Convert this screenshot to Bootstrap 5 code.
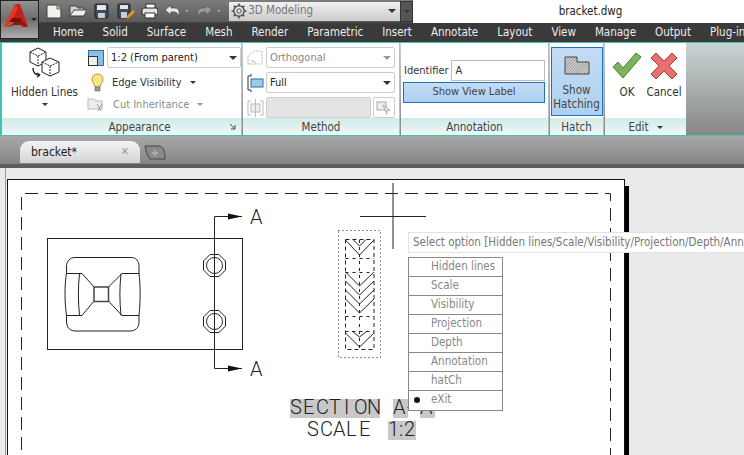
<!DOCTYPE html>
<html lang="en">
<head>
  <meta charset="UTF-8">
  <title>bracket.dwg</title>
  <meta name="viewport" content="width=device-width, initial-scale=1">
  <link href="https://cdn.jsdelivr.net/npm/bootstrap@5.3.0/dist/css/bootstrap.min.css" rel="stylesheet">
  <style>
    body { width: 744px; height: 455px; overflow: hidden; font: 11.5px/1.2 "DejaVu Sans Condensed", Roboto, "Liberation Sans", sans-serif; color: #333; background: #e9eaec; }
    .app-btn { width: 39px; height: 39px; left: 0; top: 0; background: linear-gradient(#929292, #6d6d6d 50%, #adadad); border: 1px solid #222; z-index: 2; }
    .qat-bar { height: 23px; }
    .qat-dark { width: 413px; padding-left: 45px; background: linear-gradient(#7d7d7d, #5a5a5a); gap: 6px; border-bottom: 1px solid #444; }
    .qat-combo { width: 172px; height: 19px; margin-left: 1px; background: linear-gradient(#f0f0f0, #cbcbcb); color: #777; font-size: 11.5px; padding-left: 2px; }
    .qat-combo .gear-icon { margin-right: 1px; }
    .qat-more { width: 13px; height: 21px; background: #555; border: 1px solid #333; margin-left: -6px; }
    .title-area { background: #fff; color: #222; font-size: 11.5px; padding-left: 24px; }
    .menu-row { height: 19px; background: #3a3a3a; padding: 1px 0 0 53px; gap: 19px; color: #ececec; font-size: 11.5px; white-space: nowrap; }
    .ribbon-row { height: 94px; background: linear-gradient(#c9d4d4, #878787); border-top: 1px solid #3fc4b4; border-bottom: 1px solid #3fc4b4; border-left: 2px solid #3fc4b4; }
    .rb-panel { background: #fff; border-right: 1px solid #bbb; margin-right: 1px; }
    .rb-body { height: 75px; }
    .rb-title { height: 17px; background: linear-gradient(#d0ebe8, #eef9f8); color: #444; text-align: center; padding-top: 1px; line-height: 16px; font-size: 11.5px; }
    .rb-combo { height: 21px; margin-left: 2px; border: 1px solid #ccc; background: #fff; padding: 0 3px; font-size: 11px; color: #222; border-radius: 2px; }
    .rb-combo.is-off { color: #888; }
    .rb-combo.is-blank { background: #e4e4e4; }
    .arrow-dn { width: 0; height: 0; border-left: 4px solid transparent; border-right: 4px solid transparent; border-top: 4px solid #333; }
    .arrow-sm { border-left-width: 3px; border-right-width: 3px; border-top-width: 3px; }
    .arrow-off { border-top-color: #999; }
    .rb-line { height: 21px; font-size: 11px; white-space: nowrap; }
    .line-tight { margin-top: 1px; }
    .rb-big { font-size: 11.5px; line-height: 14px; text-align: center; }
    .anno-body { padding: 17px 3px 0 2px; }
    .id-label { padding-left: 1px; font-size: 11px; }
    .id-input { width: 95px; height: 21px; margin-left: 2px; border: 1px solid #bbb; padding: 1px 4px; font-size: 11px; line-height: 17px; }
    .btn-on { background: linear-gradient(#c4dcf4, #aed0f0); border: 1px solid #1a6fc6; color: #444; border-radius: 0; padding: 0; font-size: 11px; }
    .btn-on:hover { background: #b8d6f2; border-color: #1a6fc6; color: #444; }
    .btn-label { height: 21px; margin-top: 1px; }
    .btn-hatch { width: 52px; height: 69px; font-size: 11.5px; }
    .tab-row { height: 32px; background: linear-gradient(#a8a8a8, #848484); border-bottom: 4px solid #5c5c5c; padding: 5px 0 0 20px; }
    .doc-tab { width: 120px; height: 22px; background: linear-gradient(#f4f4f4, #d4d4d4); border-radius: 9px 9px 0 0; padding: 0 11px; font-size: 12px; color: #222; }
    .tab-x { color: #999; font-weight: 700; font-size: 11px; }
    .cad-area { height: 287px; }
    .cad-svg { left: 0; top: 0; }
    .hint-box { left: 408px; top: 64px; width: 336px; height: 21px; background: #fff; border: 1px solid #e2e2e2; border-right: 0; color: #777; font-size: 11.5px; line-height: 19px; padding-left: 4px; white-space: nowrap; overflow: hidden; }
    .opt-menu { left: 408px; top: 89px; width: 95px; border: 1px solid #888; background: #fff; border-radius: 0; }
    .opt-menu .list-group-item { height: 19px; padding: 0 0 0 22px; line-height: 17px; font-size: 11.5px; color: #888; border-color: #888; position: relative; }
    .opt-dot { left: 5px; top: 6px; width: 6px; height: 6px; background: #111; }
    .cad-label { font-family: Roboto, "Liberation Mono", monospace; font-weight: 300; fill: #222; }
  </style>
</head>
<body>

  <!-- application button -->
  <div class="app-btn position-absolute d-flex align-items-center">
    <svg width="37" height="37" viewBox="0 0 37 37">
      <path d="M14 3 L19 3 L27 26 L21 26 L19 19 L11 19 L6 26 L3 26 Z" fill="#c4201a"/>
      <path d="M14 3 L3 26 L8 26 L12 17 L17 7 Z" fill="#e23a28"/>
      <path d="M11 17 L20 17 L21 21 L8 21 Z" fill="#7a100e"/>
      <path d="M8 26 L13 21 L23 21 L27 26 L21 24 L13 24 Z" fill="#8e1512"/>
      <path d="M30 17 L36 17 L33 20 Z" fill="#222"/>
    </svg>
  </div>

  <!-- quick access + title -->
  <div class="qat-bar d-flex">
    <div class="qat-dark d-flex align-items-center">
      <svg width="18" height="16" viewBox="0 0 18 16"><path d="M2 2 H12 L16 6 V15 H2 Z" fill="#f2f2ea" stroke="#444"/><path d="M12 2 V6 H16" fill="#ccc" stroke="#666"/></svg>
      <svg width="18" height="16" viewBox="0 0 18 16"><path d="M1 3 H7 L9 5 H15 V13 H1 Z" fill="#cdd6dc" stroke="#444"/><path d="M1 13 L5 7 H18 L15 13 Z" fill="#eee" stroke="#444"/></svg>
      <svg width="18" height="16" viewBox="0 0 18 16"><rect x="2" y="1" width="13" height="14" rx="1" fill="#3f4c5c" stroke="#222"/><rect x="4" y="2" width="9" height="5" fill="#e8e8e8"/><rect x="5" y="10" width="7" height="5" fill="#ccd"/></svg>
      <svg width="18" height="16" viewBox="0 0 18 16"><rect x="1" y="1" width="12" height="14" rx="1" fill="#3f4c5c" stroke="#222"/><rect x="3" y="2" width="8" height="4" fill="#e8e8e8"/><rect x="4" y="9" width="6" height="6" fill="#ccd"/><path d="M9 14 L16 7 L18 9 L11 16 Z" fill="#e89a20"/></svg>
      <svg width="18" height="16" viewBox="0 0 18 16"><rect x="5" y="1" width="9" height="5" fill="#fff" stroke="#333"/><rect x="1" y="5" width="16" height="7" rx="2" fill="#e4e4e4" stroke="#222"/><rect x="4" y="10" width="10" height="5" fill="#fff" stroke="#333"/></svg>
      <svg width="26" height="16" viewBox="0 0 26 16"><path d="M1 7 L7 2 V5 H11 C15 5 16 9 15 14 C14 10 12 9 10 9 H7 V12 Z" fill="#e8e8e8" stroke="#333" stroke-width=".6"/><path d="M21 7 H25 L23 9 Z" fill="#aaa"/></svg>
      <svg width="26" height="16" viewBox="0 0 26 16"><path d="M16 7 L10 2 V5 H6 C2 5 1 9 2 14 C3 10 5 9 7 9 H10 V12 Z" fill="#9a9a9a" stroke="#555" stroke-width=".6"/><path d="M21 7 H25 L23 9 Z" fill="#aaa"/></svg>
      <div class="qat-combo d-flex align-items-center">
        <svg class="gear-icon" width="16" height="16" viewBox="0 0 16 16"><circle cx="8" cy="8" r="5.2" fill="none" stroke="#555" stroke-width="1.5"/><circle cx="8" cy="8" r="2.2" fill="none" stroke="#555"/><path d="M8 .5 V3 M8 13 V15.5 M.5 8 H3 M13 8 H15.5 M2.7 2.7 L4.4 4.4 M11.6 11.6 L13.3 13.3 M13.3 2.7 L11.6 4.4 M4.4 11.6 L2.7 13.3" stroke="#555" stroke-width="1.6"/></svg>
        <span class="flex-grow-1">3D Modeling</span>
        <span class="arrow-dn me-1"></span>
      </div>
      <div class="qat-more d-flex flex-column align-items-center justify-content-center"><span class="arrow-dn arrow-sm"></span></div>
    </div>
    <div class="title-area flex-grow-1 d-flex align-items-center justify-content-center">bracket.dwg</div>
  </div>

  <!-- ribbon tabs -->
  <div class="menu-row d-flex align-items-center">
    <span>Home</span><span>Solid</span><span>Surface</span><span>Mesh</span><span>Render</span><span>Parametric</span><span>Insert</span><span>Annotate</span><span>Layout</span><span>View</span><span>Manage</span><span>Output</span><span>Plug-in</span>
  </div>

  <!-- ribbon -->
  <div class="ribbon-row d-flex">
    <!-- Appearance -->
    <div class="rb-panel" style="width:240px">
      <div class="rb-body d-flex">
        <div class="rb-big d-flex flex-column align-items-center pt-1" style="width:85px">
          <svg width="34" height="34" viewBox="0 0 34 34" fill="#fff" stroke="#222">
            <path d="M2 5 L10 1 L18 5 V15 L10 19 L2 15 Z"/><path d="M2 5 L10 9 L18 5 M10 9 V19" stroke-dasharray="2 1"/>
            <path d="M14 15 L22 11 L31 15 V25 L22 29 L14 25 Z"/><path d="M14 15 L22 19 L31 15 M22 19 V29" stroke-dasharray="2 1"/>
            <path d="M5 21 C5 26 7 28 12 28 M12 28 L9 26 M12 28 L9 30" fill="none" stroke-width="1.4"/>
          </svg>
          <span class="mt-1">Hidden Lines</span>
          <span class="arrow-dn arrow-sm mt-1"></span>
        </div>
        <div class="flex-grow-1 pt-1">
          <div class="rb-line d-flex align-items-center">
            <svg class="flex-shrink-0" width="18" height="18" viewBox="0 0 18 18"><rect x="1.5" y="1.5" width="15" height="15" fill="#8fc0e4" stroke="#2f6fa8"/><rect x="1.5" y="7.5" width="9" height="9" fill="#eee" stroke="#333"/></svg>
            <div class="rb-combo d-flex align-items-center justify-content-between flex-grow-1"><span>1:2 (From parent)</span><span class="arrow-dn"></span></div>
          </div>
          <div class="rb-line d-flex align-items-center mt-1">
            <svg class="ms-1 flex-shrink-0" width="13" height="20" viewBox="0 0 13 20"><path d="M6.5 1 C10 1 12 3.5 12 6.5 C12 9.5 9.5 10.5 9 14 H4 C3.5 10.5 1 9.5 1 6.5 C1 3.5 3 1 6.5 1 Z" fill="#f7e58a" stroke="#b39a30"/><rect x="4" y="14" width="5" height="4" fill="#999" stroke="#555" stroke-width=".5"/></svg>
            <span class="ms-2">Edge Visibility</span>
            <span class="arrow-dn arrow-sm ms-2"></span>
          </div>
          <div class="rb-line line-tight d-flex align-items-center text-black-50">
            <svg class="flex-shrink-0" width="18" height="16" viewBox="0 0 18 16" fill="#eee" stroke="#bbb"><path d="M1 2 H7 L9 4 H15 V12 H1 Z"/><path d="M10 7 L14 14 M15 7 L11 14" stroke="#999"/></svg>
            <span class="ms-2">Cut Inheritance</span>
            <span class="arrow-dn arrow-sm arrow-off ms-2"></span>
          </div>
        </div>
      </div>
      <div class="rb-title d-flex justify-content-between ps-5 pe-1"><span class="flex-grow-1">Appearance</span><svg class="mt-1" width="8" height="8" viewBox="0 0 8 8"><path d="M1 1 L6 6 M6 2 V6 H2" stroke="#444" fill="none"/></svg></div>
    </div>

    <!-- Method -->
    <div class="rb-panel" style="width:157px">
      <div class="rb-body d-flex flex-column gap-0 pt-1 ps-1 pe-1">
        <div class="d-flex align-items-center">
          <svg class="flex-shrink-0" width="17" height="18" viewBox="0 0 17 18" fill="none" stroke="#bbb"><path d="M1 15 V7 L7 2 H15 V15 H1" stroke-dasharray="2 1"/><path d="M4 11 L9 14"/></svg>
          <div class="rb-combo is-off d-flex align-items-center justify-content-between flex-grow-1"><span>Orthogonal</span><span class="arrow-dn arrow-off"></span></div>
        </div>
        <div class="d-flex align-items-center mt-1">
          <svg class="flex-shrink-0" width="17" height="18" viewBox="0 0 17 18"><rect x="4" y="5" width="12" height="8" fill="#9ecbea" stroke="#2f6fa8"/><path d="M4 2 H1 V16 H4 M4 2 V0 M4 16 V18" fill="none" stroke="#333"/></svg>
          <div class="rb-combo d-flex align-items-center justify-content-between flex-grow-1"><span>Full</span><span class="arrow-dn"></span></div>
        </div>
        <div class="d-flex align-items-center mt-1">
          <svg class="flex-shrink-0" width="17" height="18" viewBox="0 0 17 18" fill="none" stroke="#bbb"><rect x="4" y="5" width="9" height="8" fill="#eee"/><path d="M4 2 H1 V16 H4 M13 2 H16 V16 H13 M8.500 0 V18"/></svg>
          <div class="rb-combo is-blank flex-grow-1"></div>
          <div class="rb-combo d-flex align-items-center" style="width:22px;padding:0 2px">
            <svg width="16" height="15" viewBox="0 0 16 15" fill="#eee" stroke="#aaa"><rect x="1" y="2" width="9" height="8"/><path d="M7 5 L14 10 L10 11 L11 14 Z"/></svg>
          </div>
        </div>
      </div>
      <div class="rb-title">Method</div>
    </div>

    <!-- Annotation -->
    <div class="rb-panel" style="width:148px">
      <div class="rb-body anno-body">
        <div class="d-flex align-items-center">
          <span class="id-label">Identifier</span>
          <div class="id-input">A</div>
        </div>
        <button type="button" class="btn btn-on btn-label w-100 d-block">Show View Label</button>
      </div>
      <div class="rb-title">Annotation</div>
    </div>

    <!-- Hatch -->
    <div class="rb-panel" style="width:54px">
      <div class="rb-body px-0 pt-1">
        <button type="button" class="btn btn-on btn-hatch rb-big d-flex flex-column align-items-center mx-auto">
          <svg class="mt-2 mb-2" width="26" height="19" viewBox="0 0 26 19"><defs><pattern id="hatchfill" width="2" height="2" patternUnits="userSpaceOnUse" patternTransform="rotate(45)"><rect width="2" height="2" fill="#ddd"/><rect width="1" height="2" fill="#999"/></pattern></defs><path d="M1 1 H13 V6 H25 V18 H1 Z" fill="url(#hatchfill)" stroke="#444"/></svg>
          <span>Show<br>Hatching</span>
        </button>
      </div>
      <div class="rb-title">Hatch</div>
    </div>

    <!-- Edit -->
    <div class="rb-panel" style="width:81px;border-right:0;margin-right:0">
      <div class="rb-body d-flex justify-content-between rb-big px-1 pt-2">
        <div class="d-flex flex-column align-items-center" style="width:36px">
          <svg width="30" height="30" viewBox="0 0 30 30"><path d="M1 16 L6 11 L11 17 L24 2 L29 6 L11 27 Z" fill="#7db35a" stroke="#4a7f34"/></svg>
          <span class="mt-1">OK</span>
        </div>
        <div class="d-flex flex-column align-items-center" style="width:36px">
          <svg width="30" height="30" viewBox="0 0 30 30"><path d="M2 7 L7 2 L15 10 L23 2 L28 7 L20 15 L28 23 L23 28 L15 20 L7 28 L2 23 L10 15 Z" fill="#e87070" stroke="#b23c3c" stroke-linejoin="round"/></svg>
          <span class="mt-1">Cancel</span>
        </div>
      </div>
      <div class="rb-title d-flex align-items-center justify-content-center gap-2">Edit <span class="arrow-dn arrow-sm"></span></div>
    </div>
  </div>

  <!-- document tabs -->
  <div class="tab-row d-flex gap-1">
    <div class="doc-tab d-flex align-items-center justify-content-between"><span>bracket*</span><span class="tab-x">✕</span></div>
    <svg class="mt-1" width="22" height="16" viewBox="0 0 22 16"><path d="M1 1 H16 C20 3 21 7 21 14 H6 C3 10 2 6 1 1 Z" fill="#8a8a8a" stroke="#444"/><path d="M11 5 V11 M8 8 H14" stroke="#aaa" stroke-width="2"/></svg>
  </div>

  <!-- drawing -->
  <div class="cad-area position-relative">
    <svg class="cad-svg position-absolute" width="744" height="287" viewBox="0 168 744 287">
      <rect x="5" y="168" width="1" height="287" fill="#999"/>
      <rect x="625" y="186" width="4" height="269" fill="#000"/>
      <rect x="7.500" y="179.500" width="617" height="290" fill="#fff" stroke="#111"/>
      <path d="M21.500 470 V193.500 H610.500 V470" fill="none" stroke="#222" stroke-dasharray="13 7"/>
      <rect x="47.500" y="238.500" width="195" height="111" fill="none" stroke="#222"/>
      <path d="M214.500 216.500 V368.500 M214.500 216.500 H242 M214.500 368.500 H242" fill="none" stroke="#222"/>
      <path d="M228 213.500 L242 216.500 L228 219.500 Z M228 365.500 L242 368.500 L228 371.500 Z" fill="#111"/>
      <g fill="none" stroke="#222">
        <path d="M210 254.500 H219 L225.500 261 V270 L219 276.500 H210 L203.500 270 V261 Z"/>
        <circle cx="214.500" cy="265.500" r="8"/>
        <path d="M210 310.500 H219 L225.500 317 V326 L219 332.500 H210 L203.500 326 V317 Z"/>
        <circle cx="214.500" cy="321.500" r="8"/>
        <path d="M75 257.500 H131 C136 257.500 139 261 139 266 V273 C140.500 285 140.500 303 139 315 V322 C139 328 135 331 130 331 H76 C70 331 67 328 66.500 322 V315 C64.500 303 64.500 285 66.500 273 V266 C67 261 70 257.500 75 257.500 Z"/>
        <path d="M66.500 273.500 H82 L94 287 M66.500 315.500 H82 L94 301 M139 273.500 H122 L108.500 287 M139 315.500 H122 L108.500 301"/>
        <path d="M79.500 273.500 C78 288 78 300 79.500 315.500 M121 273.500 C119.500 288 119.500 300 121 315.500"/>
        <rect x="94" y="287" width="14.500" height="14.500" stroke="#444" stroke-width="1.500"/>
      </g>
      <text class="cad-label" x="250" y="224" font-size="20">A</text>
      <text class="cad-label" x="250" y="376" font-size="20">A</text>

      <!-- section view -->
      <rect x="338.500" y="230.500" width="42" height="127" fill="none" stroke="#222" stroke-dasharray="1 3"/>
      <g fill="none" stroke="#222">
        <rect x="345.500" y="239.500" width="28.500" height="110" stroke-dasharray="4 3"/>
        <path d="M359.500 240 V350 M345.500 258.500 H374 M345.500 272.500 H374 M345.500 316.500 H374 M345.500 331.500 H374" stroke-dasharray="3 4"/>
        <path d="M353 239.500 L359.500 246 L366 239.500 M345.500 240 L359.500 255 L374 240"/>
        <path d="M345.500 272 L359.500 286 L374 272 M345.500 281 L359.500 295 L374 281 M345.500 290 L359.500 304 L374 290 M345.500 299 L359.500 313 L374 299"/>
        <path d="M352 331 L359.500 337 L367 331 M345.500 333 L359.500 347 L374 333"/>
      </g>

      <!-- title -->
      <rect x="290" y="399" width="90" height="19" fill="#c8c8c8"/>
      <rect x="393" y="399" width="15" height="19" fill="#c8c8c8"/>
      <rect x="420" y="399" width="15" height="19" fill="#c8c8c8"/>
      <rect x="388" y="421" width="28" height="19" fill="#c8c8c8"/>
      <text class="cad-label" x="290 303 316 329 344 354 367 380 393 407 420" y="414" font-size="20">SECTION A-A</text>
      <text class="cad-label" x="307 320 333 346 359 372 388 399 404" y="436" font-size="20">SCALE 1:2</text>

      <!-- crosshair -->
      <path d="M393 183 V249 M360 216.500 H426" stroke="#222" fill="none"/>
    </svg>

    <div class="hint-box position-absolute">Select option [Hidden lines/Scale/Visibility/Projection/Depth/Annotation/hatCh/eXit]</div>

    <div class="opt-menu list-group list-group-flush position-absolute">
      <div class="list-group-item">Hidden lines</div>
      <div class="list-group-item">Scale</div>
      <div class="list-group-item">Visibility</div>
      <div class="list-group-item">Projection</div>
      <div class="list-group-item">Depth</div>
      <div class="list-group-item">Annotation</div>
      <div class="list-group-item">hatCh</div>
      <div class="list-group-item"><span class="opt-dot position-absolute rounded-circle"></span>eXit</div>
    </div>
  </div>

</body>
</html>
